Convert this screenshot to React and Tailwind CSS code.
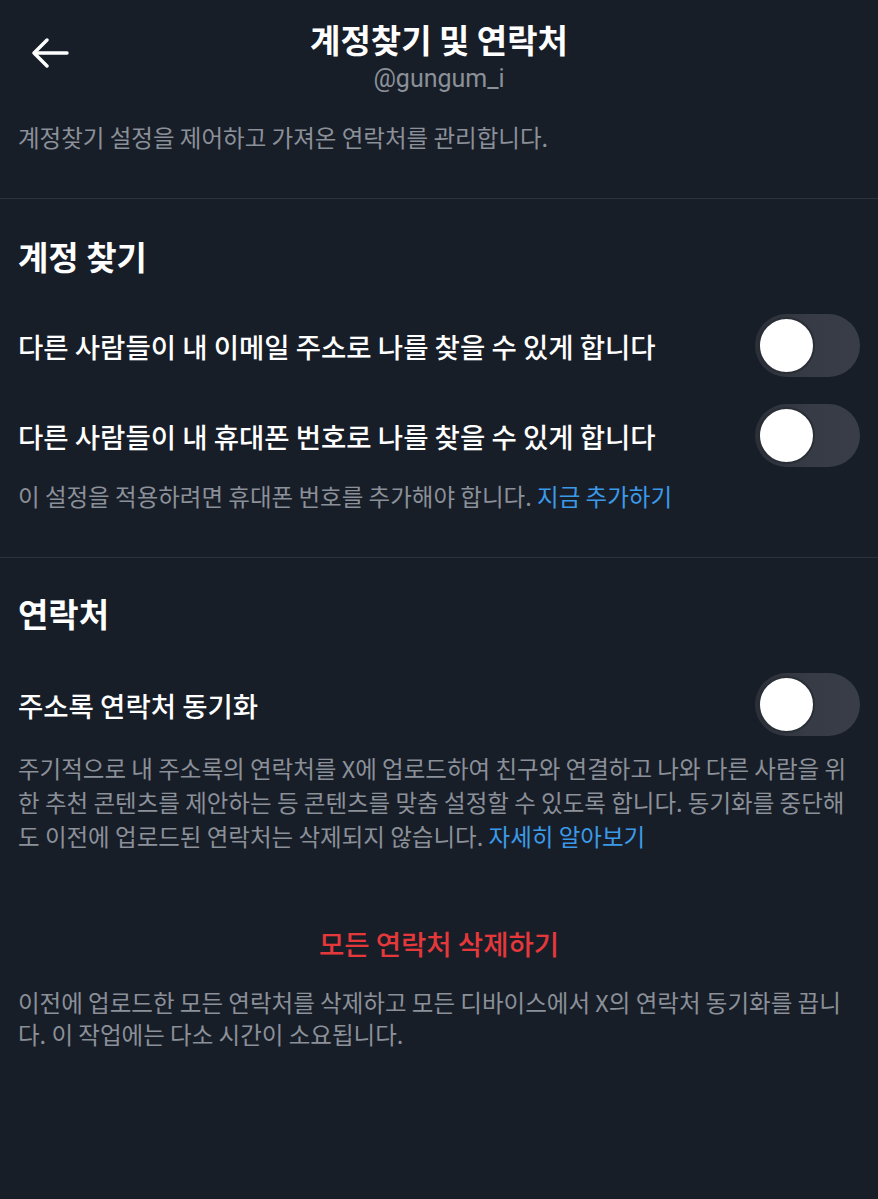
import React from "react";

const FONT = { fontFamily: '"Noto Sans CJK KR", "Noto Sans", sans-serif' };

function Toggle() {
  return (
    <div className="relative h-[63px] w-[105px] shrink-0 rounded-full bg-gradient-to-r from-[#2a2f38] via-[#363b45] to-[#383d47]">
      <div className="absolute left-[3px] top-[3px] h-[57px] w-[57px] rounded-full border-[2px] border-[#2a2e36] bg-white" />
    </div>
  );
}

function ToggleRow({ label }) {
  return (
    <div className="flex items-center justify-between pl-[18px] pr-[18px]">
      <span className="text-[27.5px] font-medium leading-[36px] text-white">{label}</span>
      <Toggle />
    </div>
  );
}

export default function App() {
  return (
    <div className="min-h-[1199px] w-full bg-[#181e28] text-white" style={FONT}>
      {/* header */}
      <header className="grid grid-cols-[90px_1fr_90px] pt-[19px]">
        <div className="flex pl-[32px] pt-[19px]">
          <svg width="37" height="30" viewBox="0 0 37 30" fill="none" stroke="white" strokeWidth="3.4" strokeLinecap="round" strokeLinejoin="round">
            <path d="M35 15H3" />
            <path d="M15 2L2 15l13 13" />
          </svg>
        </div>
        <div className="flex flex-col items-center">
          <h1 className="text-[33px] font-bold leading-[40px]">계정찾기 및 연락처</h1>
          <span
            className="mt-[4px] text-[25px] leading-[32px] text-[#8b9099]"
            style={{ fontFamily: 'Roboto, "Noto Sans", sans-serif' }}
          >
            @gungum_i
          </span>
        </div>
        <div />
      </header>

      <p className="px-[18px] pt-[25px] text-[23.5px] leading-[34px] text-[#8b9099]">
        계정찾기 설정을 제어하고 가져온 연락처를 관리합니다.
      </p>

      <div className="mt-[44px] h-px bg-[#2d333d]" />

      {/* account discovery */}
      <section className="pt-[36px]">
        <h2 className="px-[18px] text-[33px] font-bold leading-[42px]">계정 찾기</h2>
        <div className="mt-[37px] flex flex-col gap-[27px]">
          <ToggleRow label="다른 사람들이 내 이메일 주소로 나를 찾을 수 있게 합니다" />
          <ToggleRow label="다른 사람들이 내 휴대폰 번호로 나를 찾을 수 있게 합니다" />
        </div>
        <p className="mt-[12px] px-[18px] text-[23.5px] leading-[34px] text-[#8b9099]">
          이 설정을 적용하려면 휴대폰 번호를 추가해야 합니다. <span className="text-[#3b9ae8]">지금 추가하기</span>
        </p>
      </section>

      <div className="mt-[44px] h-px bg-[#2d333d]" />

      {/* contacts */}
      <section className="pt-[34px]">
        <h2 className="px-[18px] text-[33px] font-bold leading-[42px]">연락처</h2>
        <div className="mt-[39px]">
          <ToggleRow label="주소록 연락처 동기화" />
        </div>
        <p className="mt-[15px] px-[18px] text-[23.5px] leading-[34px] text-[#8b9099]">
          주기적으로 내 주소록의 연락처를 X에 업로드하여 친구와 연결하고 나와 다른 사람을 위
          <br />
          한 추천 콘텐츠를 제안하는 등 콘텐츠를 맞춤 설정할 수 있도록 합니다. 동기화를 중단해
          <br />
          도 이전에 업로드된 연락처는 삭제되지 않습니다. <span className="text-[#3b9ae8]">자세히 알아보기</span>
        </p>
      </section>

      {/* delete all contacts */}
      <section className="pt-[70px]">
        <div className="text-center text-[27.5px] font-medium leading-[40px] text-[#e5383b]">모든 연락처 삭제하기</div>
        <p className="mt-[23px] px-[18px] text-[23.5px] leading-[32px] text-[#8b9099]">
          이전에 업로드한 모든 연락처를 삭제하고 모든 디바이스에서 X의 연락처 동기화를 끕니
          <br />
          다. 이 작업에는 다소 시간이 소요됩니다.
        </p>
      </section>
    </div>
  );
}
